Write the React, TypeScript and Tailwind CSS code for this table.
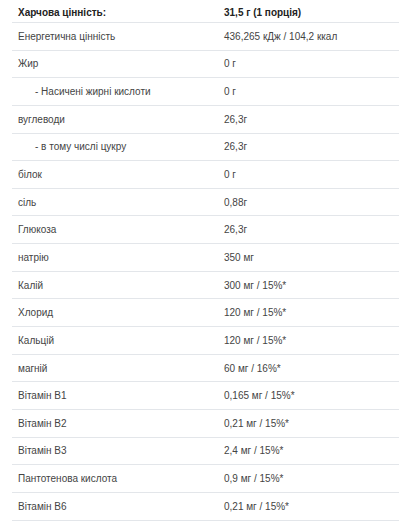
import React from 'react';

type Row = { label: string; value: string; sub?: boolean };

const rows: Row[] = [
  { label: 'Енергетична цінність', value: '436,265 кДж / 104,2 ккал' },
  { label: 'Жир', value: '0 г' },
  { label: '- Насичені жирні кислоти', value: '0 г', sub: true },
  { label: 'вуглеводи', value: '26,3г' },
  { label: '- в тому числі цукру', value: '26,3г', sub: true },
  { label: 'білок', value: '0 г' },
  { label: 'сіль', value: '0,88г' },
  { label: 'Глюкоза', value: '26,3г' },
  { label: 'натрію', value: '350 мг' },
  { label: 'Калій', value: '300 мг / 15%*' },
  { label: 'Хлорид', value: '120 мг / 15%*' },
  { label: 'Кальцій', value: '120 мг / 15%*' },
  { label: 'магній', value: '60 мг / 16%*' },
  { label: 'Вітамін B1', value: '0,165 мг / 15%*' },
  { label: 'Вітамін B2', value: '0,21 мг / 15%*' },
  { label: 'Вітамін B3', value: '2,4 мг / 15%*' },
  { label: 'Пантотенова кислота', value: '0,9 мг / 15%*' },
  { label: 'Вітамін B6', value: '0,21 мг / 15%*' },
];

export default function App() {
  return (
    <div className="w-[410px] h-[527px] bg-white overflow-hidden font-['Liberation_Sans',Arial,sans-serif] text-[10px] text-[#444]">
      <div className="mx-[12px] w-[387px]">
        <div className="flex h-[23px] items-center pt-[2px] border-b border-[#e3e6ea] font-bold text-[#222]">
          <div className="w-[212px] pl-[6px]">Харчова цінність:</div>
          <div>31,5 г (1 порція)</div>
        </div>
        {rows.map((r) => (
          <div key={r.label} className="flex h-[27.65px] items-center border-b border-[#e3e6ea]">
            <div className={r.sub ? 'w-[212px] pl-[23px]' : 'w-[212px] pl-[6px]'}>{r.label}</div>
            <div>{r.value}</div>
          </div>
        ))}
      </div>
    </div>
  );
}
